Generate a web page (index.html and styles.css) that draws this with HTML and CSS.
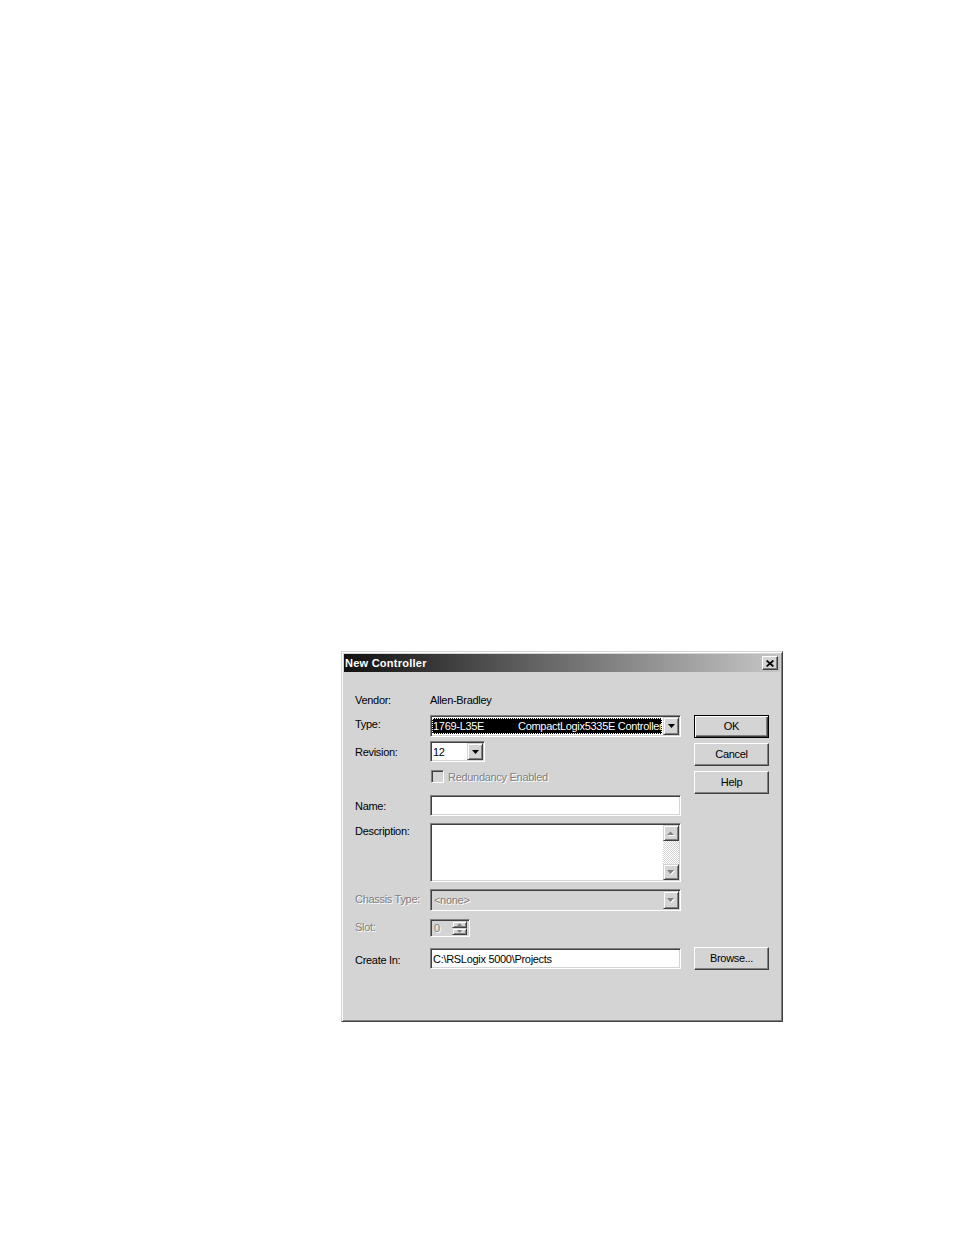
FILE: index.html
```html
<!DOCTYPE html>
<html>
<head>
<meta charset="utf-8">
<title>New Controller</title>
<link rel="stylesheet" href="styles.css">
</head>
<body>
<div class="dialog">
  <div class="titlebar">
    <span class="title">New Controller</span>
    <span class="close"><svg width="8" height="7" viewBox="0 0 8 7"><path d="M0.6 0.5 L7.4 6.5 M7.4 0.5 L0.6 6.5" stroke="#000" stroke-width="1.7" fill="none"/></svg></span>
  </div>
  <div class="client">
    <div class="form">
      <div class="row r-vendor"><span class="label">Vendor:</span><span class="value">Allen-Bradley</span></div>
      <div class="row r-type"><span class="label">Type:</span>
        <div class="combo sunken c-type">
          <div class="combo-text selected"><span class="cat">1769-L35E</span><span>CompactLogix5335E Controller</span></div>
          <span class="ddbtn"><svg width="7" height="4" viewBox="0 0 7 4"><polygon points="0,0 7,0 3.5,4" fill="#000"/></svg></span>
        </div>
      </div>
      <div class="row r-rev"><span class="label">Revision:</span>
        <div class="combo sunken c-rev">
          <div class="combo-text">12</div>
          <span class="ddbtn"><svg width="7" height="4" viewBox="0 0 7 4"><polygon points="0,0 7,0 3.5,4" fill="#000"/></svg></span>
        </div>
      </div>
      <div class="row r-red"><span class="label"></span><span class="check"></span><span class="disabled-text">Redundancy Enabled</span></div>
      <div class="row r-name"><span class="label">Name:</span><div class="sunken field"></div></div>
      <div class="row r-desc"><span class="label">Description:</span>
        <div class="sunken desc">
          <div class="desc-area"></div>
          <div class="vscroll">
            <span class="sbtn"><svg width="8" height="5" viewBox="0 0 8 5"><polygon points="1,5 8,5 4.5,1.5" fill="#fff"/><polygon points="0,4 7,4 3.5,0.5" fill="#808080"/></svg></span>
            <span class="track"></span>
            <span class="sbtn"><svg width="8" height="5" viewBox="0 0 8 5"><polygon points="1,1 8,1 4.5,5" fill="#fff"/><polygon points="0,0 7,0 3.5,4" fill="#808080"/></svg></span>
          </div>
        </div>
      </div>
      <div class="row r-chassis"><span class="label disabled-text">Chassis Type:</span>
        <div class="combo sunken c-chassis">
          <div class="combo-text disabled-text">&lt;none&gt;</div>
          <span class="ddbtn"><svg width="8" height="5" viewBox="0 0 8 5"><polygon points="1,1 8,1 4.5,5" fill="#fff"/><polygon points="0,0 7,0 3.5,4" fill="#808080"/></svg></span>
        </div>
      </div>
      <div class="row r-slot"><span class="label disabled-text">Slot:</span>
        <div class="sunken spin">
          <span class="spin-text disabled-text">0</span>
          <span class="spin-btns">
            <span class="spbtn"><svg width="5" height="3" viewBox="0 0 5 3"><polygon points="0,3 5,3 2.5,0" fill="#808080"/></svg></span>
            <span class="spbtn"><svg width="5" height="3" viewBox="0 0 5 3"><polygon points="0,0 5,0 2.5,3" fill="#808080"/></svg></span>
          </span>
        </div>
      </div>
      <div class="row r-create"><span class="label">Create In:</span><div class="sunken field">C:\RSLogix 5000\Projects</div></div>
    </div>
    <div class="buttons">
      <div class="btn default">OK</div>
      <div class="btn">Cancel</div>
      <div class="btn">Help</div>
      <div class="btn browse">Browse...</div>
    </div>
  </div>
</div>
</body>
</html>
```

FILE: styles.css
```css
html, body {
  margin: 0;
  background: #ffffff;
}
body {
  font-family: "Liberation Sans", Arial, sans-serif;
  font-size: 11px;
  letter-spacing: -0.3px;
  color: #000;
  height: 1235px;
}
.dialog {
  margin: 651px 0 0 341px;
  width: 442px;
  height: 371px;
  box-sizing: border-box;
  background: #d4d4d4;
  border: 1px solid;
  border-color: #d4d4d4 #404040 #404040 #d4d4d4;
  box-shadow: inset 1px 1px #ffffff, inset -1px -1px #808080;
  padding: 2px;
  display: flex;
  flex-direction: column;
}
.titlebar {
  height: 18px;
  flex: none;
  background: linear-gradient(to right, #101010 0%, #5c5c5c 40%, #c6c6c6 100%);
  display: flex;
  align-items: center;
  justify-content: space-between;
  padding: 0 2px 0 1px;
}
.title {
  color: #ffffff;
  font-weight: bold;
  font-size: 11px;
  letter-spacing: 0.25px;
}
.close {
  width: 16px;
  height: 14px;
  box-sizing: border-box;
  background: #d4d4d4;
  border: 1px solid;
  border-color: #ffffff #404040 #404040 #ffffff;
  box-shadow: inset -1px -1px #808080;
  display: flex;
  align-items: center;
  justify-content: center;
}
.client {
  flex: 1;
  display: flex;
  padding-left: 11px;
}
.form {
  width: 326px;
  padding-top: 21px;
  display: flex;
  flex-direction: column;
}
.row {
  display: flex;
  align-items: flex-start;
}
.label {
  width: 75px;
  flex: none;
  line-height: 14px;
  white-space: nowrap;
}
.value { line-height: 14px; }
.r-type { margin-top: 8px; }
.r-type .label { padding-top: 2px; }
.r-rev { margin-top: 4px; }
.r-rev .label { padding-top: 4px; }
.r-red { margin-top: 8px; line-height: 14px; }
.r-name { margin-top: 11px; }
.r-name .label { padding-top: 4px; }
.r-desc { margin-top: 7px; }
.r-desc .label { padding-top: 1px; }
.r-chassis { margin-top: 7px; }
.r-chassis .label { padding-top: 3px; }
.r-slot { margin-top: 8px; }
.r-slot .label { padding-top: 1px; }
.r-create { margin-top: 11px; }
.r-create .label { padding-top: 5px; }

.sunken {
  box-sizing: border-box;
  border: 1px solid;
  border-color: #808080 #ffffff #ffffff #808080;
  box-shadow: inset 1px 1px #404040, inset -1px -1px #d4d4d4;
  background: #ffffff;
}
.field {
  width: 251px;
  height: 21px;
  padding: 2px 2px 0 2px;
  line-height: 16px;
  white-space: nowrap;
}
.combo {
  display: flex;
  padding: 1px;
}
.c-type { width: 251px; height: 22px; }
.c-rev { width: 55px; height: 21px; }
.c-chassis { width: 251px; height: 22px; background: #d4d4d4; }
.combo-text {
  flex: 1;
  margin: 1px 1px 1px 0;
  line-height: 16px;
  padding-left: 1px;
  white-space: nowrap;
  overflow: hidden;
}
.c-chassis .combo-text { padding-left: 2px; }
.selected {
  background: #000000;
  color: #ffffff;
  outline: 1px dotted #ffffff;
  outline-offset: -1px;
}
.cat {
  display: inline-block;
  width: 85px;
}
.ddbtn {
  width: 16px;
  flex: none;
  box-sizing: border-box;
  background: #d4d4d4;
  border: 1px solid;
  border-color: #d4d4d4 #404040 #404040 #d4d4d4;
  box-shadow: inset 1px 1px #ffffff, inset -1px -1px #808080;
  display: flex;
  align-items: center;
  justify-content: center;
}
.disabled-text {
  color: #808080;
  text-shadow: 1px 1px 0 #ffffff;
}
.check {
  width: 13px;
  height: 13px;
  margin-left: 1px;
  box-sizing: border-box;
  border: 1px solid;
  border-color: #808080 #ffffff #ffffff #808080;
  box-shadow: inset 1px 1px #404040, inset -1px -1px #d4d4d4;
  background: #d4d4d4;
  flex: none;
}
.r-red .disabled-text { margin-left: 4px; }
.desc {
  width: 251px;
  height: 59px;
  padding: 1px;
  display: flex;
}
.desc-area { flex: 1; }
.vscroll {
  width: 16px;
  display: flex;
  flex-direction: column;
}
.sbtn {
  height: 16px;
  flex: none;
  box-sizing: border-box;
  background: #d4d4d4;
  border: 1px solid;
  border-color: #d4d4d4 #404040 #404040 #d4d4d4;
  box-shadow: inset 1px 1px #ffffff, inset -1px -1px #808080;
  display: flex;
  align-items: center;
  justify-content: center;
}
.track {
  flex: 1;
  background: repeating-conic-gradient(#ffffff 0 25%, #d4d4d4 0 50%) 0 0 / 2px 2px;
}
.spin {
  width: 40px;
  height: 18px;
  padding: 1px;
  background: #d4d4d4;
  display: flex;
}
.spin-text {
  flex: 1;
  line-height: 14px;
  padding-left: 2px;
}
.spin-btns {
  width: 15px;
  display: flex;
  flex-direction: column;
  margin-right: 1px;
}
.spbtn {
  flex: 1;
  box-sizing: border-box;
  background: #d4d4d4;
  border: 1px solid;
  border-color: #d4d4d4 #404040 #404040 #d4d4d4;
  box-shadow: inset 1px 1px #ffffff, inset -1px -1px #808080;
  display: flex;
  align-items: center;
  justify-content: center;
}
.buttons {
  margin-left: 13px;
  padding-top: 43px;
  width: 75px;
  display: flex;
  flex-direction: column;
  gap: 5px;
}
.btn {
  height: 23px;
  box-sizing: border-box;
  background: #d4d4d4;
  border: 1px solid;
  border-color: #ffffff #404040 #404040 #ffffff;
  box-shadow: inset -1px -1px #808080;
  display: flex;
  align-items: center;
  justify-content: center;
  padding-bottom: 1px;
}
.btn.default {
  border-color: #000000;
  box-shadow: inset 1px 1px #ffffff, inset -1px -1px #404040, inset -2px -2px #808080;
}
.btn.browse {
  margin-top: 148px;
}
```
